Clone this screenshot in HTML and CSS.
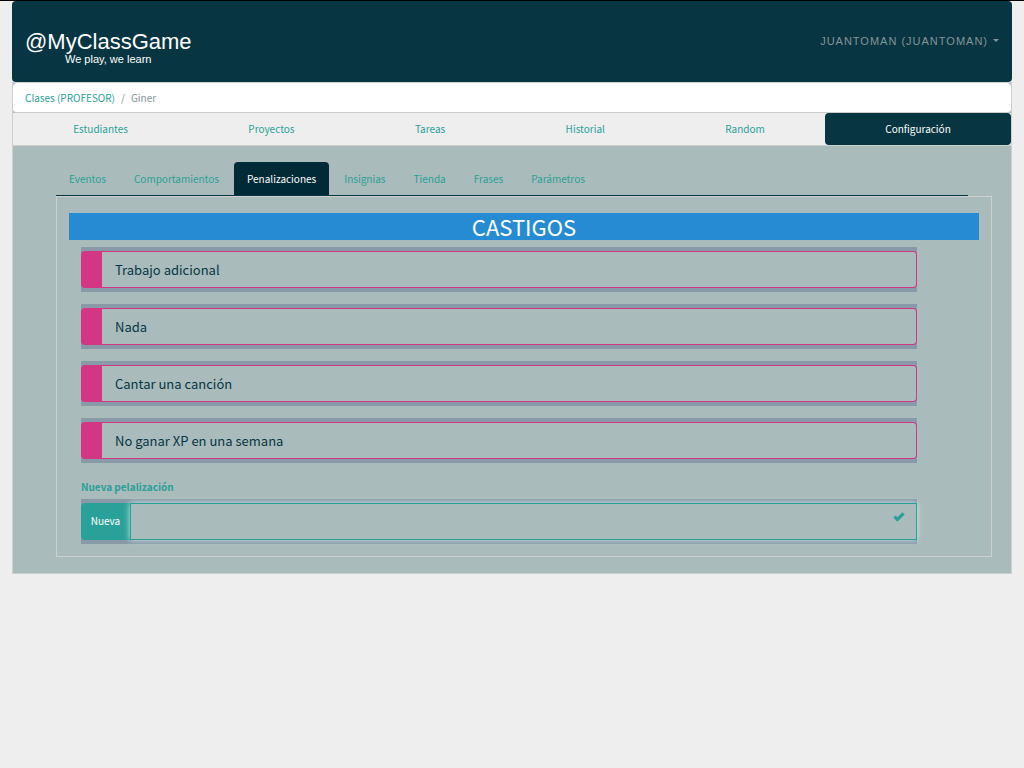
FILE: index.html
```html
<!DOCTYPE html>
<html lang="es">
<head>
<meta charset="utf-8">
<title>MyClassGame</title>
<link rel="stylesheet" href="styles.css">
</head>
<body>
<div class="page">
  <header class="header">
    <a class="brand" href="#">
      <span class="brand-name">@MyClassGame</span>
      <span class="brand-tagline">We play, we learn</span>
    </a>
    <button class="user-menu" type="button">juantoman (juantoman) <span class="caret"></span></button>
  </header>
  <div class="panel">
    <nav class="breadcrumb" aria-label="Ruta">
      <a href="#">Clases (PROFESOR)</a><span class="separator">/</span><span>Giner</span>
    </nav>
    <nav class="main-nav">
      <a href="#">Estudiantes</a>
      <a href="#">Proyectos</a>
      <a href="#">Tareas</a>
      <a href="#">Historial</a>
      <a href="#">Random</a>
      <a class="active" href="#">Configuración</a>
    </nav>
    <main class="content">
      <nav class="tabs">
        <a href="#">Eventos</a>
        <a href="#">Comportamientos</a>
        <a class="active" href="#">Penalizaciones</a>
        <a href="#">Insignias</a>
        <a href="#">Tienda</a>
        <a href="#">Frases</a>
        <a href="#">Parámetros</a>
      </nav>
      <section class="box">
        <h1 class="title">CASTIGOS</h1>
        <form class="form">
          <div class="group"><span class="marker"></span><input type="text" aria-label="Castigo 1" value="Trabajo adicional"></div>
          <div class="group"><span class="marker"></span><input type="text" aria-label="Castigo 2" value="Nada"></div>
          <div class="group"><span class="marker"></span><input type="text" aria-label="Castigo 3" value="Cantar una canción"></div>
          <div class="group"><span class="marker"></span><input type="text" aria-label="Castigo 4" value="No ganar XP en una semana"></div>
          <label class="new-label" for="nueva">Nueva pelalización</label>
          <div class="group group-new">
            <span class="addon">Nueva</span>
            <input id="nueva" type="text">
            <svg class="check" viewBox="0 0 12 10" aria-hidden="true"><path d="M0.3 5.6 2.5 3.4 4.4 5.2 9.4 0.3 11.7 2.5 4.4 9.8Z"/></svg>
          </div>
        </form>
      </section>
    </main>
  </div>
</div>
</body>
</html>
```
FILE: styles.css
```css
* { box-sizing: border-box; }

body {
  margin: 0;
  border-top: 1px solid #000;
  background: #eee;
  color: #073642;
  font: 10px/16px "Noto Sans CJK SC", sans-serif;
}

a { color: #2aa198; text-decoration: none; }

.page { margin: 0 12px; }

.header {
  display: flex;
  justify-content: space-between;
  align-items: center;
  height: 81px;
  padding: 0 13px 2px;
  border-radius: 4px;
  background: #073642;
  font-family: "Liberation Sans", sans-serif;
}

.brand { display: flex; flex-direction: column; padding-top: 12px; color: #fff; }
.brand-name { font-size: 22px; line-height: 24px; }
.brand-tagline { padding-left: 40px; font-size: 11px; line-height: 10px; }

.user-menu {
  display: flex;
  align-items: center;
  gap: 5px;
  padding: 0;
  border: 0;
  background: none;
  color: #839496;
  font: 11px/16px "Liberation Sans", sans-serif;
  letter-spacing: 1px;
  text-transform: uppercase;
}

.caret { border: 3px solid transparent; border-top-color: #839496; border-bottom: 0; }

.panel { border: 1px solid #ccd0cf; background: #a9bbba; }

.breadcrumb {
  display: flex;
  padding: 7px 12px;
  border-bottom: 1px solid #ccc;
  border-radius: 4px;
  background: #fff;
  color: #839496;
  line-height: 15px;
}
.separator { padding: 0 6px; }

.main-nav { display: flex; border-bottom: 1px solid #ccd0cf; background: #eee; text-align: center; }
.main-nav a { flex: 1 1 auto; padding: 8px 0; }
.main-nav .active { border-radius: 4px; background: #073642; color: #fff; }

.content { padding: 16px 19px 16px 43px; }

.tabs { display: flex; gap: 2px; margin-right: 24px; border-bottom: 1px solid #073642; }
.tabs a { padding: 9px 13px 8px; }
.tabs .active { border-radius: 4px 4px 0 0; background: #002b36; color: #fff; }

.box { padding: 16px 12px 12px; border: 1px solid #ccd0cf; }

.title {
  margin: 0 0 7px;
  background: #268bd2;
  color: #fff;
  font-size: 22px;
  font-weight: 400;
  line-height: 27px;
  text-align: center;
}

.form { display: flex; flex-direction: column; gap: 12px; margin: 0 62px 0 12px; }

.group { display: flex; position: relative; padding: 4px 0; background: #8899a8; }
.group input {
  flex: 1;
  min-width: 0;
  height: 37px;
  padding: 0 13px;
  border: 1px solid #d33682;
  border-left: 0;
  border-radius: 0 4px 4px 0;
  outline: 0;
  background: #a9bcbb;
  color: #073642;
  font: 13px/20px "Noto Sans CJK SC", sans-serif;
}

.marker { width: 21px; border-radius: 4px 0 0 4px; background: #d33682; }

.new-label { margin: 4px 0 -8px; color: #2aa198; font-weight: 700; }

.addon {
  width: 49px;
  padding: 10px 0;
  border-radius: 4px 0 0 4px;
  background: #2aa198;
  color: #fff;
  text-align: center;
}

.group-new input {
  border: 1px solid #2aa198;
  border-radius: 0;
  box-shadow: 0 0 6px #ceebe8;
}

.check { position: absolute; top: 13px; right: 12px; width: 12px; height: 10px; fill: #2aa198; }
```
